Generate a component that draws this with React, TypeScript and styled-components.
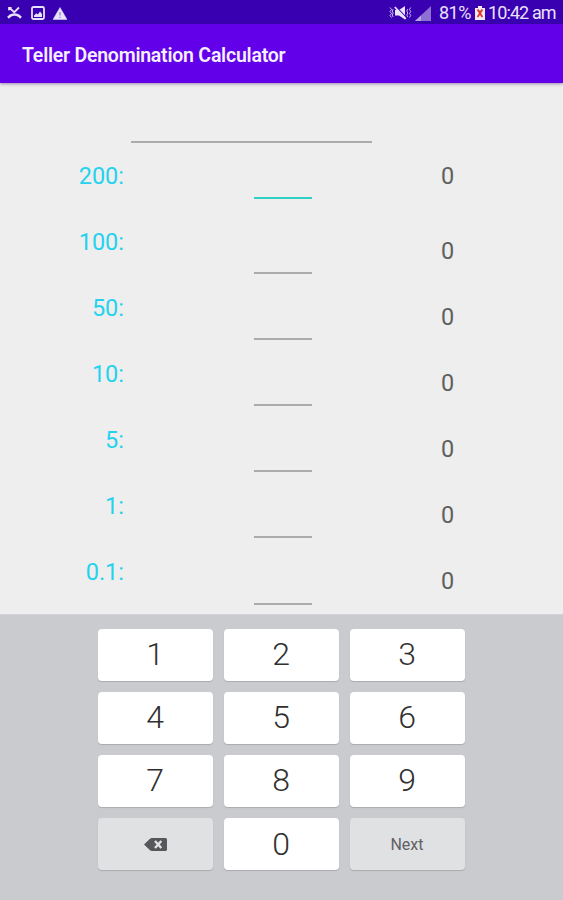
import React from "react";
import styled, { createGlobalStyle } from "styled-components";

const GlobalStyle = createGlobalStyle`
  * { box-sizing: border-box; }
  body { margin: 0; background: #eeeeee; font-family: Roboto, sans-serif; }
`;

const Screen = styled.div`
  width: 563px;
  height: 900px;
  display: flex;
  flex-direction: column;
  overflow: hidden;
  background: #eeeeee;
`;

const StatusBar = styled.header`
  height: 24px;
  flex: none;
  display: flex;
  align-items: center;
  justify-content: space-between;
  padding: 2px 7px 0 7px;
  background: #3900b2;
  color: #e9e2fa;
`;

const StatusGroup = styled.div<{ $gap: number }>`
  display: flex;
  align-items: center;
  gap: ${(p) => p.$gap}px;
  svg { display: block; flex: none; }
`;

const StatusText = styled.span<{ $width: number; $indent?: number; $tracking: number }>`
  width: ${(p) => p.$width}px;
  padding-left: ${(p) => p.$indent ?? 0}px;
  font-size: 18px;
  line-height: 22px;
  letter-spacing: ${(p) => p.$tracking}px;
  white-space: nowrap;
`;

const AppBar = styled.div`
  height: 59px;
  flex: none;
  display: flex;
  align-items: center;
  padding: 4px 0 0 22px;
  background: #6200ea;
  box-shadow: 0 1px 3px rgba(50, 20, 90, 0.45);
  z-index: 1;
`;

const Title = styled.h1`
  margin: 0;
  color: #f5efff;
  font-size: 19.5px;
  font-weight: 600;
  line-height: 24px;
  letter-spacing: -0.23px;
  white-space: nowrap;
`;

const Form = styled.main`
  height: 531px;
  flex: none;
  overflow: hidden;
`;

const TotalField = styled.div`
  width: 241px;
  height: 60px;
  margin-left: 131px;
  border-bottom: 2px solid #ababab;
`;

const Row = styled.div`
  height: 66.1px;
  display: grid;
  grid-template-columns: 124px 129px 60px 128px 1fr;
  align-items: start;
  font-size: 23.5px;
  line-height: 28px;
`;

const Label = styled.span`
  padding-top: 18.6px;
  text-align: right;
  color: #25d2ed;
`;

const Input = styled.span<{ $active: boolean }>`
  grid-column: 3;
  width: 58px;
  margin-left: 1px;
  height: ${(p) => (p.$active ? 56 : 65)}px;
  border-bottom: 2px solid ${(p) => (p.$active ? "#2fcfc4" : "#ababab")};
`;

const Amount = styled.span<{ $active: boolean }>`
  grid-column: 5;
  padding-top: ${(p) => (p.$active ? 18.6 : 27.6)}px;
  color: #606060;
`;

const Keyboard = styled.section`
  flex: 1;
  display: grid;
  grid-template-columns: repeat(3, 115px);
  grid-auto-rows: 52px;
  gap: 11.2px 11px;
  align-content: start;
  justify-content: center;
  padding-top: 13.5px;
  background: #c9cbcf;
  border-top: 1px solid #d4d5d8;
`;

const Key = styled.button<{ $action?: boolean }>`
  display: flex;
  align-items: center;
  justify-content: center;
  padding: ${(p) => (p.$action ? "0 1px 0 0" : "0 1px 1px 0")};
  border: 0;
  border-radius: 4px;
  background: ${(p) => (p.$action ? "#e0e1e3" : "#ffffff")};
  box-shadow: 0 1px 1px #a9abaf;
  color: ${(p) => (p.$action ? "#606265" : "#303030")};
  font-family: Roboto, sans-serif;
  font-size: ${(p) => (p.$action ? 16 : 32)}px;
  font-weight: ${(p) => (p.$action ? 400 : 300)};
`;

const MissedCallIcon = () => (
  <svg width="15" height="14" viewBox="0 0 15 14" fill="none" stroke="currentColor">
    <path d="M2 1.5l5.3 4.7 4.7-4.7M2 4.2V1.8h2.6" strokeWidth="1.8" />
    <path d="M1 11.8l2-1.9C5.5 8.2 9.5 8.2 12 9.9l2 1.9" strokeWidth="2.6" />
  </svg>
);

const PictureIcon = () => (
  <svg width="14" height="14" viewBox="0 0 14 14">
    <rect x="1" y="1" width="12" height="12" rx="1.5" fill="none" stroke="currentColor" strokeWidth="1.8" />
    <path d="M3 11V9.5l2.3-2.2 1.5 1.2L9 5.6l2 2.4v3z" fill="currentColor" />
  </svg>
);

const WarningIcon = () => (
  <svg width="14" height="13" viewBox="0 0 14 13">
    <path d="M7 .5L14 12.5H0z" fill="currentColor" stroke="currentColor" strokeWidth=".5" />
    <path d="M7 5v3.5M7 9.7v1.3" stroke="#a48bdc" strokeWidth="1.5" />
  </svg>
);

const MuteIcon = () => (
  <svg width="23" height="16" viewBox="0 0 23 16" fill="none" stroke="currentColor">
    <path d="M6 5h4l6-4v13.5L10 10.5H6z" fill="currentColor" stroke="none" />
    <path d="M7.2 1.8l9.5 10" stroke="#3900b2" strokeWidth="1.2" />
    <path d="M5.8 2l11 11.8" strokeWidth="1.8" />
    <path d="M1 2.5l1.5 2L1 6.5l1.5 2-1.5 2 1.5 2M4.2 4l-1 2 1 2-1 2 1 2M18.8 4l-1 2 1 2-1 2 1 2M21.7 2.5l-1.2 2 1.2 2-1.2 2 1.2 2-1.2 2" strokeWidth="1" opacity=".8" />
  </svg>
);

const SignalIcon = () => (
  <svg width="16" height="15" viewBox="0 0 16 15">
    <path d="M16 0v15H0z" fill="#8e6fd2" />
    <path d="M6 9.4V15H0z" fill="#b9a5e5" />
  </svg>
);

const BatteryIcon = () => (
  <svg width="10" height="14" viewBox="0 0 10 14">
    <path d="M3 0h4v2h3v12H0V2h3z" fill="#f4e8ef" />
    <path d="M2.6 3.5L7.4 11M7.4 3.5L2.6 11M5 4.5V9" stroke="#d93a2c" strokeWidth="1.8" />
  </svg>
);

const BackspaceIcon = () => (
  <svg width="23" height="13" viewBox="0 0 23 13">
    <path d="M0 6.5L6 .8Q6.8 0 8 0h13.5Q23 0 23 1.5v10q0 1.5-1.5 1.5H8q-1.2 0-2-.8z" fill="#55575a" />
    <path d="M11 3l6.3 7M17.3 3L11 10" stroke="#e0e1e3" strokeWidth="2.4" />
  </svg>
);

const denominations = ["200", "100", "50", "10", "5", "1", "0.1"];
const digits = ["1", "2", "3", "4", "5", "6", "7", "8", "9"];

export default function App() {
  return (
    <Screen>
      <GlobalStyle />
      <StatusBar>
        <StatusGroup $gap={8.5}>
          <MissedCallIcon />
          <PictureIcon />
          <WarningIcon />
        </StatusGroup>
        <StatusGroup $gap={3}>
          <MuteIcon />
          <SignalIcon />
          <StatusText $width={38} $indent={5} $tracking={-0.5}>81%</StatusText>
          <BatteryIcon />
          <StatusText $width={68} $tracking={-0.9}>10:42 am</StatusText>
        </StatusGroup>
      </StatusBar>
      <AppBar>
        <Title>Teller Denomination Calculator</Title>
      </AppBar>
      <Form>
        <TotalField />
        {denominations.map((value, i) => (
          <Row key={value}>
            <Label>{value}:</Label>
            <Input $active={i === 0} />
            <Amount $active={i === 0}>0</Amount>
          </Row>
        ))}
      </Form>
      <Keyboard>
        {digits.map((d) => (
          <Key key={d}>{d}</Key>
        ))}
        <Key $action aria-label="Backspace">
          <BackspaceIcon />
        </Key>
        <Key>0</Key>
        <Key $action>Next</Key>
      </Keyboard>
    </Screen>
  );
}
